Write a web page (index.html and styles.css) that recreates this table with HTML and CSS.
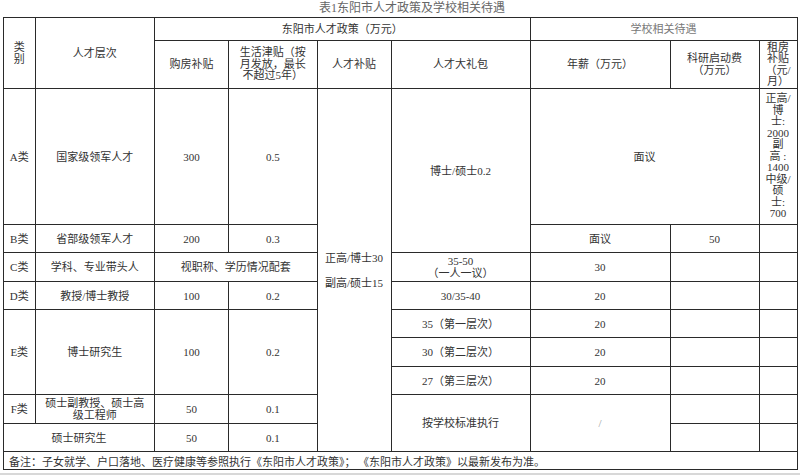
FILE: index.html
```html
<!DOCTYPE html>
<html lang="zh">
<head>
<meta charset="utf-8">
<title>表1东阳市人才政策及学校相关待遇</title>
<link rel="stylesheet" href="styles.css">
</head>
<body>
<div class="page">
  <div class="caption">表1东阳市人才政策及学校相关待遇</div>
  <table class="policy">
    <colgroup>
      <col class="c1"><col class="c2"><col class="c3"><col class="c4"><col class="c5"><col class="c6"><col class="c7"><col class="c8"><col class="c9">
    </colgroup>
    <tr class="h1">
      <th rowspan="2">类<br>别</th>
      <th rowspan="2">人才层次</th>
      <th colspan="4">东阳市人才政策（万元）</th>
      <th colspan="3" class="light">学校相关待遇</th>
    </tr>
    <tr class="h2">
      <th>购房补贴</th>
      <th>生活津贴（按<br>月发放，最长<br>不超过5年）</th>
      <th>人才补贴</th>
      <th>人才大礼包</th>
      <th>年薪（万元）</th>
      <th>科研启动费<br>（万元）</th>
      <th class="narrow">租房<br>补贴<br>（元/<br>月）</th>
    </tr>
    <tr class="ra">
      <td>A类</td>
      <td>国家级领军人才</td>
      <td>300</td>
      <td>0.5</td>
      <td rowspan="9" class="subsidy"><div>正高/博士30</div><div>副高/硕士15</div></td>
      <td rowspan="2">博士/硕士0.2</td>
      <td colspan="2">面议</td>
      <td class="narrow">正高/<br>博<br>士:<br>2000<br>副<br>高 :<br>1400<br>中级/<br>硕<br>士:<br>700</td>
    </tr>
    <tr class="r28">
      <td>B类</td>
      <td>省部级领军人才</td>
      <td>200</td>
      <td>0.3</td>
      <td>面议</td>
      <td>50</td>
      <td></td>
    </tr>
    <tr class="r29">
      <td>C类</td>
      <td>学科、专业带头人</td>
      <td colspan="2">视职称、学历情况配套</td>
      <td>35-50<br>（一人一议）</td>
      <td>30</td>
      <td></td>
      <td></td>
    </tr>
    <tr class="r28">
      <td>D类</td>
      <td>教授/博士教授</td>
      <td>100</td>
      <td>0.2</td>
      <td>30/35-40</td>
      <td>20</td>
      <td></td>
      <td></td>
    </tr>
    <tr class="r28">
      <td rowspan="3">E类</td>
      <td rowspan="3">博士研究生</td>
      <td rowspan="3">100</td>
      <td rowspan="3">0.2</td>
      <td>35（第一层次）</td>
      <td>20</td>
      <td></td>
      <td></td>
    </tr>
    <tr class="r29">
      <td>30（第二层次）</td>
      <td>20</td>
      <td></td>
      <td></td>
    </tr>
    <tr class="r28">
      <td>27（第三层次）</td>
      <td>20</td>
      <td></td>
      <td></td>
    </tr>
    <tr class="r29">
      <td>F类</td>
      <td>硕士副教授、硕士高<br>级工程师</td>
      <td>50</td>
      <td>0.1</td>
      <td rowspan="2">按学校标准执行</td>
      <td rowspan="2" class="faint">/</td>
      <td></td>
      <td></td>
    </tr>
    <tr class="r28">
      <td colspan="2">硕士研究生</td>
      <td>50</td>
      <td>0.1</td>
      <td></td>
      <td></td>
    </tr>
    <tr class="note">
      <td colspan="9">备注：子女就学、户口落地、医疗健康等参照执行《东阳市人才政策》；&nbsp;《东阳市人才政策》以最新发布为准。</td>
    </tr>
  </table>
  <div class="rule"></div>
</div>
</body>
</html>
```

FILE: styles.css
```css
html, body {
  margin: 0;
  padding: 0;
  background: #ffffff;
}

.page {
  width: 800px;
  height: 476px;
  overflow: hidden;
  font-family: "Liberation Serif", "Noto Sans CJK SC", serif;
  color: #333333;
}

.caption {
  height: 17px;
  line-height: 17px;
  font-size: 12px;
  color: #666666;
  text-align: center;
  padding-left: 24px;
}

.policy {
  margin-left: 3px;
  width: 794px;
  table-layout: fixed;
  border-collapse: collapse;
  font-size: 11px;
  line-height: 12px;
}

.c1 { width: 31.5px; }
.c2 { width: 119.5px; }
.c3 { width: 74px; }
.c4 { width: 88.5px; }
.c5 { width: 74px; }
.c6 { width: 139px; }
.c7 { width: 140px; }
.c8 { width: 89px; }
.c9 { width: 38px; }

.policy th,
.policy td {
  border: 1px solid #2a2a2a;
  padding: 0 2px;
  text-align: center;
  vertical-align: middle;
  font-weight: normal;
  overflow: hidden;
}

.policy th.light {
  color: #777777;
}

.policy .narrow {
  padding: 0;
  line-height: 11.5px;
}

.h2 th {
  line-height: 11.5px;
}

.h1 { height: 23px; }
.h2 { height: 48px; }
.ra { height: 136px; }
.r28 { height: 28px; }
.r29 { height: 29px; }
.note { height: 18px; }

.subsidy div + div {
  margin-top: 13px;
}

.policy td.faint {
  color: #999999;
}

.note td {
  text-align: left;
  padding-left: 5px;
  font-family: "Noto Sans CJK SC", sans-serif;
}

.rule {
  margin-top: 3px;
  border-top: 2px solid #d8d8d8;
}
```
